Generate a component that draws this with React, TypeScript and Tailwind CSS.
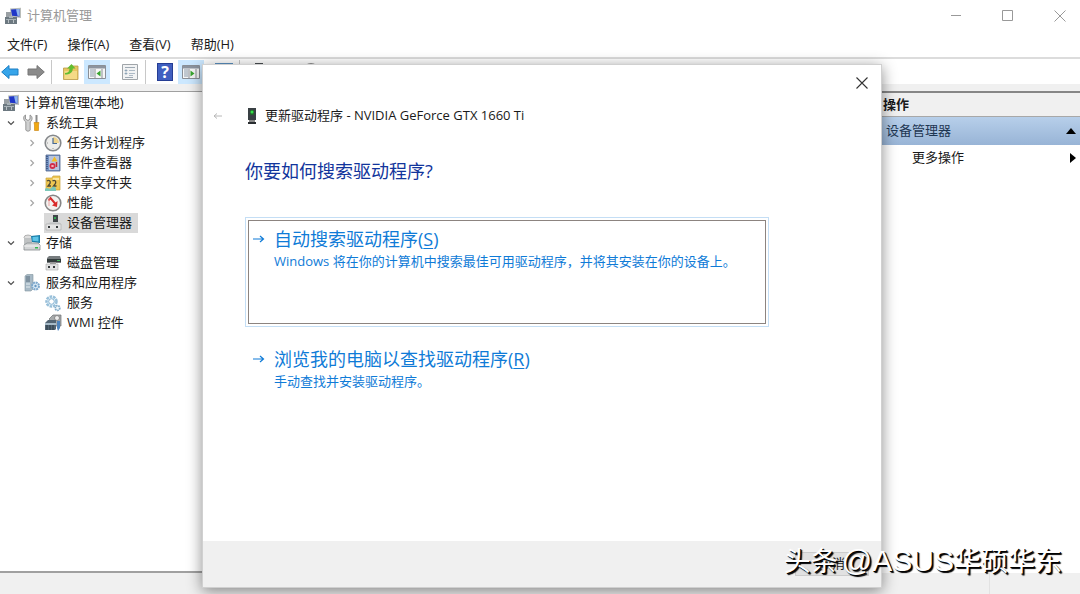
import React from 'react';

interface TreeNode {
    label: string;
    icon: React.ReactNode;
    depth: number;
    state: 'open' | 'closed' | 'leaf';
    selected?: boolean;
}

const Svg = ({ children }: { children: React.ReactNode }) => (
    <svg viewBox="0 0 18 18" className="size-[18px] shrink-0" aria-hidden="true">{children}</svg>
);

const ComputerIcon = () => (
    <Svg>
        <path d="M6 1.5 17 .8V11L7 10z" fill="#b9bdb9" />
        <path d="M7 2.5 15.5 2v7.5L8 8.8z" fill="#2037c8" />
        <path d="M12 2.2 15.5 2v7l-2-.2z" fill="#8fb6ee" />
        <path d="M2 5h5v5H2z" fill="#9aa0a4" />
        <path d="M1 10h12v7H1z" fill="#6c7880" />
        <path d="M5 9h4v2H5zM2 12h10v1H2z" fill="#a9b3b9" />
        <path d="M4 13h1v3H4zM9 13h1v3H9z" fill="#b9c0c4" />
    </Svg>
);

const ToolsIcon = () => (
    <Svg>
        <path d="M2.500 1v4L5 6.500 7 5V1c2.500 1 3 5 .2 7v8c-.5 1.600-3.800 1.600-4.400 0V8C0 6 0 2 2.500 1z" fill="#cfd0d0" stroke="#858585" strokeWidth=".8" />
        <path d="M12.500 1h2v8h-2z" fill="#8a8a8a" />
        <path d="M11 8.500h5l-.5 2.500v5.500h-4V11z" fill="#f1a912" stroke="#c8800b" strokeWidth=".6" />
    </Svg>
);

const ClockIcon = () => (
    <Svg>
        <circle cx="9" cy="9" r="7.800" fill="#ededeb" stroke="#85888b" strokeWidth="1.600" />
        <path d="M9 3v6h6a6 6 0 0 0-6-6z" fill="#eed38c" />
        <path d="M9 4v5.500h4" fill="none" stroke="#466a96" strokeWidth="1.200" />
        <path d="M9 14v1M3 9h1" stroke="#999" />
    </Svg>
);

const EventIcon = () => (
    <Svg>
        <path d="M2 1h14v16H2z" fill="#7896c6" stroke="#4b628b" strokeWidth=".8" />
        <path d="M5 2h10v14H5z" fill="#b9c5dd" />
        <path d="M3 2v14" stroke="#364e7a" strokeWidth="1.500" strokeDasharray="1 1" />
        <path d="m10.500 2.500 3 5h-6z" fill="#f3bd23" />
        <circle cx="8.500" cy="12" r="3" fill="#d32c48" />
        <path d="m7.500 11 2 2m0-2-2 2" stroke="#fff" strokeWidth=".8" />
        <path d="M12.500 8v5" stroke="#c42e31" strokeWidth="1.500" />
    </Svg>
);

const SharedIcon = () => (
    <Svg>
        <path d="M2 4h6l1-2h7v14H2z" fill="#efc752" stroke="#c6a03b" strokeWidth=".7" />
        <path d="M9 4h6v2H9z" fill="#fbe69e" />
        <path d="M3 7c2-1.500 4 0 3 2.500L4 12h3M8.500 7c2-1.500 4 0 3 2.500L9.500 12h3" fill="none" stroke="#4f4a35" strokeWidth="1.300" />
        <path d="M1 15c2-2.500 4 1 6-1s4-1 5 0v3H1z" fill="#7cc7b8" />
    </Svg>
);

const PerformanceIcon = () => (
    <Svg>
        <circle cx="9" cy="9" r="7.800" fill="#f3f1ef" stroke="#868686" strokeWidth="1.600" />
        <path d="M4.500 6.500 6.500 4l5 6" fill="none" stroke="#d92a2a" strokeWidth="2" />
        <path d="m13.500 7-.5 6-5-1.500z" fill="#d92a2a" />
        <path d="M5 4v8" stroke="#e79492" strokeWidth=".8" />
    </Svg>
);

const DeviceIcon = () => (
    <Svg>
        <path d="M9 1h5v9H9z" fill="#404548" />
        <path d="M10 3h2v2h-2z" fill="#33a851" />
        <path d="m3 10 3-2h9l2 2z" fill="#c9cbcc" />
        <path d="M2 10h15v6H2z" fill="#e4e4e4" stroke="#aaa" strokeWidth=".6" />
        <path d="M4 12h2v2H4zM12 12h2v2h-2z" fill="#35393b" />
    </Svg>
);

const StorageIcon = () => (
    <Svg>
        <ellipse cx="5" cy="3.500" rx="4" ry="2.500" fill="#dedede" stroke="#999" strokeWidth=".7" />
        <path d="M1 4h8v7H1z" fill="#bfc2c3" />
        <path d="M8 2 17 1v8l-8-1z" fill="#197eaa" />
        <path d="m9.500 3 6-.6v5l-6-.6z" fill="#5dc4e7" />
        <path d="m1 11 3-2h11l2 2v5H1z" fill="#d3d5d6" stroke="#858b8e" strokeWidth=".8" />
        <path d="M1 12h16" stroke="#f3f3f3" />
        <path d="M12 13h3v1.500h-3z" fill="#35b64e" />
    </Svg>
);

const DiskIcon = () => (
    <Svg>
        <path d="m3 4 2-2h11l1 3v4H3z" fill="#777c7e" />
        <path d="M3 5h14v3H3z" fill="#333c3c" />
        <path d="M13 6h3v1h-3z" fill="#48b75d" />
        <path d="M6 8h6v2H6z" fill="#999" />
        <path d="M2 10h12v6H2z" fill="#e2e3e3" stroke="#aaa" strokeWidth=".6" />
        <path d="M4 12h2v2H4zM9 12h2v2H9z" fill="#35393b" />
    </Svg>
);

const ServerIcon = () => (
    <Svg>
        <path d="m2 2 2-1.500h6V15l-2 2H2z" fill="#a8bac6" stroke="#82939d" strokeWidth=".6" />
        <path d="M3 3h4M3 5h4M3 7h4" stroke="#566b7a" />
        <path d="M3 10h4M3 13h4" stroke="#e3ecf1" />
        <circle cx="12.500" cy="12" r="3.500" fill="#d9e9f5" stroke="#7da8cc" strokeWidth="2" strokeDasharray="2 .7" />
        <circle cx="12.500" cy="12" r="1.200" fill="#6899c4" />
    </Svg>
);

const GearsIcon = () => (
    <Svg>
        <circle cx="7.500" cy="7.500" r="5" fill="#e8f4fb" stroke="#98bfd9" strokeWidth="2.500" strokeDasharray="2.600 .9" />
        <circle cx="7.500" cy="7.500" r="2.800" fill="#fff" stroke="#83b1d1" />
        <circle cx="13.500" cy="14" r="2.300" fill="#f1f8fc" stroke="#83acc9" strokeWidth="1.800" strokeDasharray="1.500 .6" />
    </Svg>
);

const WmiIcon = () => (
    <Svg>
        <path d="M5 5 9 1h8v11h-5z" fill="#a6a9ab" stroke="#6d7173" strokeWidth=".7" />
        <circle cx="13" cy="4" r="2.500" fill="#ededed" stroke="#888" />
        <path d="m1 9 3-3h8v9l-1 1H1z" fill="#526473" />
        <path d="M1 9h11v2H1z" fill="#a6bac8" />
        <path d="M3 11v5M6 11v5M9 11v5" stroke="#293844" />
        <path d="M13 7h3v7l-2 3-1-3z" fill="#4d84bd" />
    </Svg>
);

const DriverIcon = () => (
    <svg viewBox="0 0 10 18" className="h-[18px] w-2.5 shrink-0" aria-hidden="true">
        <path d="M1 1h8v12H1z" fill="#394044" />
        <path d="M3 3h4v5H3z" fill="#25612e" />
        <circle cx="5" cy="5" r="1.500" fill="#34e04a" />
        <path d="M2 13h6v2H2z" fill="#888" />
        <path d="M1 15h8v2H1z" fill="#292d30" />
    </svg>
);

const Arrow = ({ dir, fill, stroke }: { dir: 'left' | 'right'; fill: string; stroke: string }) => (
    <Svg>
        <path
            d={dir === 'left' ? 'M.7 9 8 2.500V6h9v6H8v3.500z' : 'M17.300 9 10 2.500V6H1v6h9v3.500z'}
            fill={fill}
            stroke={stroke}
        />
    </Svg>
);

const UpFolderIcon = () => (
    <Svg>
        <path d="M1.500 5h6l1-2h7.500v13.500H1.500z" fill="#e9c560" stroke="#b99a48" strokeWidth=".8" />
        <path d="M2.500 8H15v8H2.500z" fill="#f5da86" />
        <path d="M3 10c3 0 4.500-1.500 4.500-4.500H5L9.500 1l4 4.500h-2.700c0 4-3 6-7.800 6z" fill="#62bd31" />
    </Svg>
);

const PaneIcon = ({ side }: { side: 'left' | 'right' }) => (
    <Svg>
        <path d="M.5 2.500h17v13H.5z" fill="#f6f6f6" stroke="#8a8f96" />
        <path d="M1 3h16v2.500H1z" fill="#8c949f" />
        <path d="M2 7h4M2 9h4M2 11h4M2 13h4" stroke="#8b9bab" />
        <path d="M7 6v9M14 6v9" stroke="#8a8f96" />
        {side === 'left' ? (
            <path d="m12.500 7.500-4 3 4 3z" fill="#39a52f" />
        ) : (
            <path d="m8.500 7.500 4 3-4 3z" fill="#39a52f" />
        )}
    </Svg>
);

const PropertiesIcon = () => (
    <Svg>
        <path d="M1.500 1.500h15v15h-15z" fill="#f2f3f4" stroke="#a0a5a9" />
        <path d="M4 4.500h10M4 14.500h8" stroke="#9ea9b3" />
        <path d="M4 7h2v1H4zM4 10h2v1H4zM8 7.500h6M8 10.500h6M8 12.500h4" fill="#668db0" stroke="#9aabba" strokeWidth=".8" />
    </Svg>
);

const HelpIcon = () => (
    <span className="flex h-[18px] w-4 items-center justify-center border border-[#253d94] bg-[#405fc0] text-base leading-4 font-bold text-white">?</span>
);

const MonitorIcon = () => (
    <Svg>
        <path d="M0 0h18v12H0z" fill="#5c93c4" />
        <path d="M2 3h14v7H2z" fill="#a9d0ee" />
        <path d="M6 13h6v3H6z" fill="#888" />
    </Svg>
);

const ScanIcon = () => (
    <Svg>
        <path d="M5 0h8v13H5z" fill="#4a4f52" />
        <path d="M3 14h12v3H3z" fill="#777" />
    </Svg>
);

const DisableIcon = () => (
    <Svg>
        <circle cx="9" cy="8.500" r="8" fill="#f2f2f2" stroke="#8d8d8d" />
        <path d="M9 4v9M5 9l4 4 4-4" fill="none" stroke="#8d8d8d" strokeWidth="1.500" />
    </Svg>
);

const Chevron = ({ open }: { open: boolean }) => (
    <svg viewBox="0 0 8 8" className="size-2" fill="none" stroke={open ? '#505050' : '#a6a6a6'} aria-hidden="true">
        <path d={open ? 'M1 2.500 4 5.500 7 2.500' : 'M2.500 1 5.500 4 2.500 7'} strokeWidth="1.200" />
    </svg>
);

const LinkArrow = () => (
    <svg viewBox="0 0 12 10" className="h-2.5 w-3 shrink-0" fill="none" stroke="currentColor" strokeWidth="1.200" aria-hidden="true">
        <path d="M0 5h10.500M7 2 10.500 5 7 8" />
    </svg>
);

const menus = ['文件(F)', '操作(A)', '查看(V)', '帮助(H)'];

const nodes: TreeNode[] = [
    { label: '计算机管理(本地)', icon: <ComputerIcon />, depth: 0, state: 'leaf' },
    { label: '系统工具', icon: <ToolsIcon />, depth: 1, state: 'open' },
    { label: '任务计划程序', icon: <ClockIcon />, depth: 2, state: 'closed' },
    { label: '事件查看器', icon: <EventIcon />, depth: 2, state: 'closed' },
    { label: '共享文件夹', icon: <SharedIcon />, depth: 2, state: 'closed' },
    { label: '性能', icon: <PerformanceIcon />, depth: 2, state: 'closed' },
    { label: '设备管理器', icon: <DeviceIcon />, depth: 2, state: 'leaf', selected: true },
    { label: '存储', icon: <StorageIcon />, depth: 1, state: 'open' },
    { label: '磁盘管理', icon: <DiskIcon />, depth: 2, state: 'leaf' },
    { label: '服务和应用程序', icon: <ServerIcon />, depth: 1, state: 'open' },
    { label: '服务', icon: <GearsIcon />, depth: 2, state: 'leaf' },
    { label: 'WMI 控件', icon: <WmiIcon />, depth: 2, state: 'leaf' },
];

// Width of the gutter that holds the chevron, per level
const gutters = ['w-0.5', 'w-[23px]', 'w-11'];

const ToolButton = ({ label, active, children }: { label: string; active?: boolean; children: React.ReactNode }) => (
    <button aria-label={label} className={`flex h-6 w-[26px] shrink-0 items-center justify-center ${active ? 'bg-[#cce8ff]' : ''}`}>
        {children}
    </button>
);

const Toolbar = () => (
    <div className="flex h-[27px] items-center border-t-2 border-[#dcdcdc] bg-white">
        <div className="flex w-[51px] items-center justify-end pr-0.5">
            <ToolButton label="后退"><Arrow dir="left" fill="#37a5ea" stroke="#1d7fc4" /></ToolButton>
            <ToolButton label="前进"><Arrow dir="right" fill="#8b8b8b" stroke="#777777" /></ToolButton>
        </div>
        <div className="flex h-6 items-center border-l border-[#c8c8c8] pl-1.5">
            <ToolButton label="上移"><UpFolderIcon /></ToolButton>
            <ToolButton label="显示控制台树" active><PaneIcon side="left" /></ToolButton>
        </div>
        <div className="flex h-6 w-[35px] items-center justify-center pl-1">
            <ToolButton label="属性"><PropertiesIcon /></ToolButton>
        </div>
        <div className="flex h-6 items-center border-l border-[#c8c8c8] pl-1.5">
            <ToolButton label="帮助"><HelpIcon /></ToolButton>
            <ToolButton label="显示操作窗格" active><PaneIcon side="right" /></ToolButton>
        </div>
        <div className="flex h-6 w-[35px] items-center justify-center pl-1">
            <ToolButton label="远程计算机"><MonitorIcon /></ToolButton>
        </div>
        <div className="flex h-6 items-center gap-[26px] border-l border-[#c8c8c8] pl-1.5">
            <ToolButton label="扫描检测硬件改动"><ScanIcon /></ToolButton>
            <ToolButton label="禁用设备"><DisableIcon /></ToolButton>
        </div>
    </div>
);

const Tree = () => (
    <ul className="w-[205px] shrink-0 border-t border-r border-b-2 border-[#a0a0a0] bg-white pt-px">
        {nodes.map((n) => (
            <li key={n.label} className="flex h-5 items-center">
                <span className={`flex shrink-0 justify-end ${gutters[n.depth]}`}>
                    {n.state !== 'leaf' && <span className="pr-2"><Chevron open={n.state === 'open'} /></span>}
                </span>
                <span className={`flex h-5 items-center gap-[5px] pr-1.5 ${n.selected ? 'bg-[#d9d9d9]' : ''}`}>
                    {n.icon}
                    {n.label}
                </span>
            </li>
        ))}
    </ul>
);

const Actions = () => (
    <aside className="w-[202px] shrink-0 border-t-2 border-l border-[#868686] bg-white">
        <h2 className="flex h-6 items-center border-b border-[#a8a8a8] bg-[#f0f0f0] pl-1 font-bold">操作</h2>
        <button className="flex h-7 w-full items-center justify-between bg-linear-to-b from-[#b7cfea] to-[#98b4d6] pr-1 pl-[7px] text-[#1e3652]">
            设备管理器
            <svg viewBox="0 0 10 6" className="h-1.5 w-2.5" fill="#000" aria-hidden="true"><path d="M5 0 10 6H0z" /></svg>
        </button>
        <button className="flex h-[26px] w-full items-center justify-between pr-1 pl-[33px]">
            更多操作
            <svg viewBox="0 0 6 10" className="h-2.5 w-1.5" fill="#000" aria-hidden="true"><path d="M0 0 6 5 0 10z" /></svg>
        </button>
    </aside>
);

const Choice = ({ title, accel, text, focused }: { title: string; accel: string; text: string; focused?: boolean }) => (
    <button className={`border p-0.5 text-left text-[#0f7bd7] ${focused ? 'border-[#c4def5]' : 'border-transparent'}`}>
        <span className={`flex h-[104px] gap-[9px] border px-1 pt-1.5 ${focused ? 'border-[#8c8480]' : 'border-transparent'}`}>
            <span className="flex h-6 items-center"><LinkArrow /></span>
            <span className="block">
                <span className="block text-lg leading-6">{title}(<u className="decoration-1 underline-offset-2">{accel}</u>)</span>
                <span className="block leading-5">{text}</span>
            </span>
        </span>
    </button>
);

const UpdateDialog = () => (
    <div role="dialog" aria-labelledby="question" className="flex grow flex-col border border-[#d0d0d0] bg-white shadow-[0_3px_14px_rgba(0,0,0,0.45)]">
        <div className="flex h-9 items-center justify-end pr-3">
            <button aria-label="关闭">
                <svg viewBox="0 0 14 14" className="size-3.5" fill="none" stroke="#333" aria-hidden="true">
                    <path d="m1.500 1.500 11 11m0-11-11 11" strokeWidth="1.100" />
                </svg>
            </button>
        </div>
        <div className="flex h-[30px] items-center pl-2.5">
            <button aria-label="返回" className="mr-6 text-[#b8b8b8]">
                <svg viewBox="0 0 10 8" className="h-2 w-2.5" fill="none" stroke="currentColor" aria-hidden="true">
                    <path d="M9 4H1M4 1.500 1 4l3 2.500" />
                </svg>
            </button>
            <DriverIcon />
            <span className="pl-2">更新驱动程序 - NVIDIA GeForce GTX 1660 Ti</span>
        </div>
        <div className="flex grow flex-col pr-[112px] pl-[42px]">
            <h1 id="question" className="mt-6 mb-[30px] text-lg leading-8 text-[#12359c]">你要如何搜索驱动程序?</h1>
            <Choice title="自动搜索驱动程序" accel="S" text="Windows 将在你的计算机中搜索最佳可用驱动程序，并将其安装在你的设备上。" focused />
            <div className="mt-2.5 flex flex-col">
                <Choice title="浏览我的电脑以查找驱动程序" accel="R" text="手动查找并安装驱动程序。" />
            </div>
        </div>
        <div className="flex h-[46px] items-center justify-end bg-[#f0f0f0] pr-3">
            <button className="h-6 w-[74px] border border-[#cccccc] bg-[#e1e1e1]">取消</button>
        </div>
    </div>
);

const App: React.FC = () => {
    return (
        <div className="relative flex min-h-screen flex-col overflow-hidden bg-[#f0f0f0] font-['Open_Sans','Noto_Sans_CJK_SC',sans-serif] text-[13px] text-[#1a1a1a]">
            {/* Title bar */}
            <header className="flex h-8 items-center justify-between bg-white pl-1 text-[#999999]">
                <span className="flex items-center gap-[5px]"><ComputerIcon />计算机管理</span>
                <div className="flex items-center gap-10 pr-3.5">
                    <button aria-label="最小化">
                        <svg viewBox="0 0 12 12" className="size-3" stroke="#999" aria-hidden="true"><path d="M1 5.500h10" /></svg>
                    </button>
                    <button aria-label="最大化">
                        <svg viewBox="0 0 12 12" className="size-3" fill="none" stroke="#999" aria-hidden="true"><path d="M.5.5h10v10H.5z" /></svg>
                    </button>
                    <button aria-label="关闭窗口">
                        <svg viewBox="0 0 12 12" className="size-3" stroke="#999" aria-hidden="true"><path d="m.5.5 11 11m0-11-11 11" /></svg>
                    </button>
                </div>
            </header>

            <nav className="flex h-[25px] items-center gap-5 bg-white pl-[7px]">
                {menus.map((m) => <button key={m}>{m}</button>)}
            </nav>
            <Toolbar />

            {/* Console panes */}
            <main className="mt-[7px] flex grow">
                <Tree />
                <div className="grow bg-white" />
                <Actions />
            </main>
            <footer className="flex h-[21px] justify-end">
                <span className="w-[91px] border-l border-[#e2e2e2]" />
            </footer>

            {/* Wizard on top of the console */}
            <div className="absolute inset-0 flex pt-16 pr-[198px] pb-1.5 pl-[202px]">
                <UpdateDialog />
            </div>

            <p className="absolute right-[18px] bottom-3 font-['Liberation_Sans','Noto_Sans_CJK_SC',sans-serif] text-[27px] leading-10 whitespace-nowrap text-white [text-shadow:1px_1px_0_#000,2px_2px_1px_#000]">
                头条<span className="pl-1 text-[30px]">@ASUS</span>华硕华东
            </p>
        </div>
    );
};

export default App;
